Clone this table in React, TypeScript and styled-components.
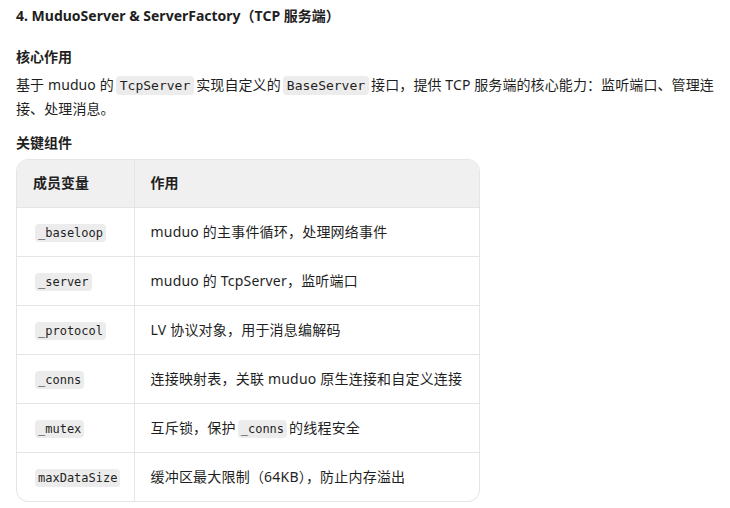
import React from "react";
import styled, { createGlobalStyle } from "styled-components";

const Global = createGlobalStyle`
  html, body { margin: 0; padding: 0; background: #ffffff; }
  body {
    font-family: "Noto Sans", "Noto Sans CJK SC", sans-serif;
    color: #1f1f1f;
    font-size: 14px;
  }
`;

const Page = styled.div`
  width: 730px;
  box-sizing: border-box;
  padding: 4px 16px 0 16px;
`;

const Title = styled.h3`
  margin: 0;
  font-size: 14px;
  font-weight: 700;
  line-height: 24px;
`;

const SubTitle = styled.h4<{ $top: number }>`
  margin: ${(p) => p.$top}px 0 4px 0;
  font-size: 14px;
  font-weight: 700;
  line-height: 24px;
`;

const Para = styled.p`
  margin: 0;
  line-height: 24px;
  font-size: 14px;
  letter-spacing: 0.1px;
`;

const Code = styled.code<{ $small?: boolean }>`
  font-family: "DejaVu Sans Mono", "Liberation Mono", monospace;
  font-size: ${(p) => (p.$small ? "12px" : "13px")};
  line-height: 1;
  letter-spacing: 0;
  background: #ececec;
  border-radius: 4px;
  padding: ${(p) => (p.$small ? "2px 3px" : "2px 4px")};
  margin: 0 2px;
`;

const TableWrap = styled.div`
  width: 462px;
  border: 1px solid #e5e5e5;
  border-radius: 12px;
  overflow: hidden;
`;

const Table = styled.table`
  width: 100%;
  border-collapse: collapse;
  table-layout: fixed;
`;

const Th = styled.th<{ $w?: number }>`
  box-sizing: border-box;
  background: #f0f0f0;
  text-align: left;
  font-weight: 700;
  font-size: 14px;
  line-height: 24px;
  padding: 11px 16px 12px 16px;
  border-bottom: 1px solid #e5e5e5;
  ${(p) => (p.$w ? `width: ${p.$w}px;` : "")}
  &:not(:last-child) { border-right: 1px solid #e5e5e5; }
`;

const Td = styled.td`
  font-size: 14px;
  line-height: 24px;
  height: 24px;
  letter-spacing: 0.2px;
  padding: 12px 16px;
  vertical-align: middle;
  white-space: nowrap;
  tr:not(:last-child) > & { border-bottom: 1px solid #e5e5e5; }
  &:not(:last-child) { border-right: 1px solid #e5e5e5; }
`;

const rows: { name: string; desc: React.ReactNode }[] = [
  { name: "_baseloop", desc: "muduo 的主事件循环，处理网络事件" },
  { name: "_server", desc: "muduo 的 TcpServer，监听端口" },
  { name: "_protocol", desc: "LV 协议对象，用于消息编解码" },
  { name: "_conns", desc: "连接映射表，关联 muduo 原生连接和自定义连接" },
  {
    name: "_mutex",
    desc: (
      <>
        互斥锁，保护<Code $small>_conns</Code>的线程安全
      </>
    ),
  },
  { name: "maxDataSize", desc: "缓冲区最大限制（64KB），防止内存溢出" },
];

export default function App() {
  return (
    <Page>
      <Global />
      <Title>4. MuduoServer &amp; ServerFactory（TCP 服务端）</Title>
      <SubTitle $top={17}>核心作用</SubTitle>
      <Para>
        基于 muduo 的<Code>TcpServer</Code>实现自定义的<Code>BaseServer</Code>接口，提供 TCP 服务端的核心能力：监听端口、管理连接、处理消息。
      </Para>
      <SubTitle $top={10}>关键组件</SubTitle>
      <TableWrap>
        <Table>
          <thead>
            <tr>
              <Th $w={117}>成员变量</Th>
              <Th>作用</Th>
            </tr>
          </thead>
          <tbody>
            {rows.map((r) => (
              <tr key={r.name}>
                <Td>
                  <Code $small>{r.name}</Code>
                </Td>
                <Td>{r.desc}</Td>
              </tr>
            ))}
          </tbody>
        </Table>
      </TableWrap>
    </Page>
  );
}
